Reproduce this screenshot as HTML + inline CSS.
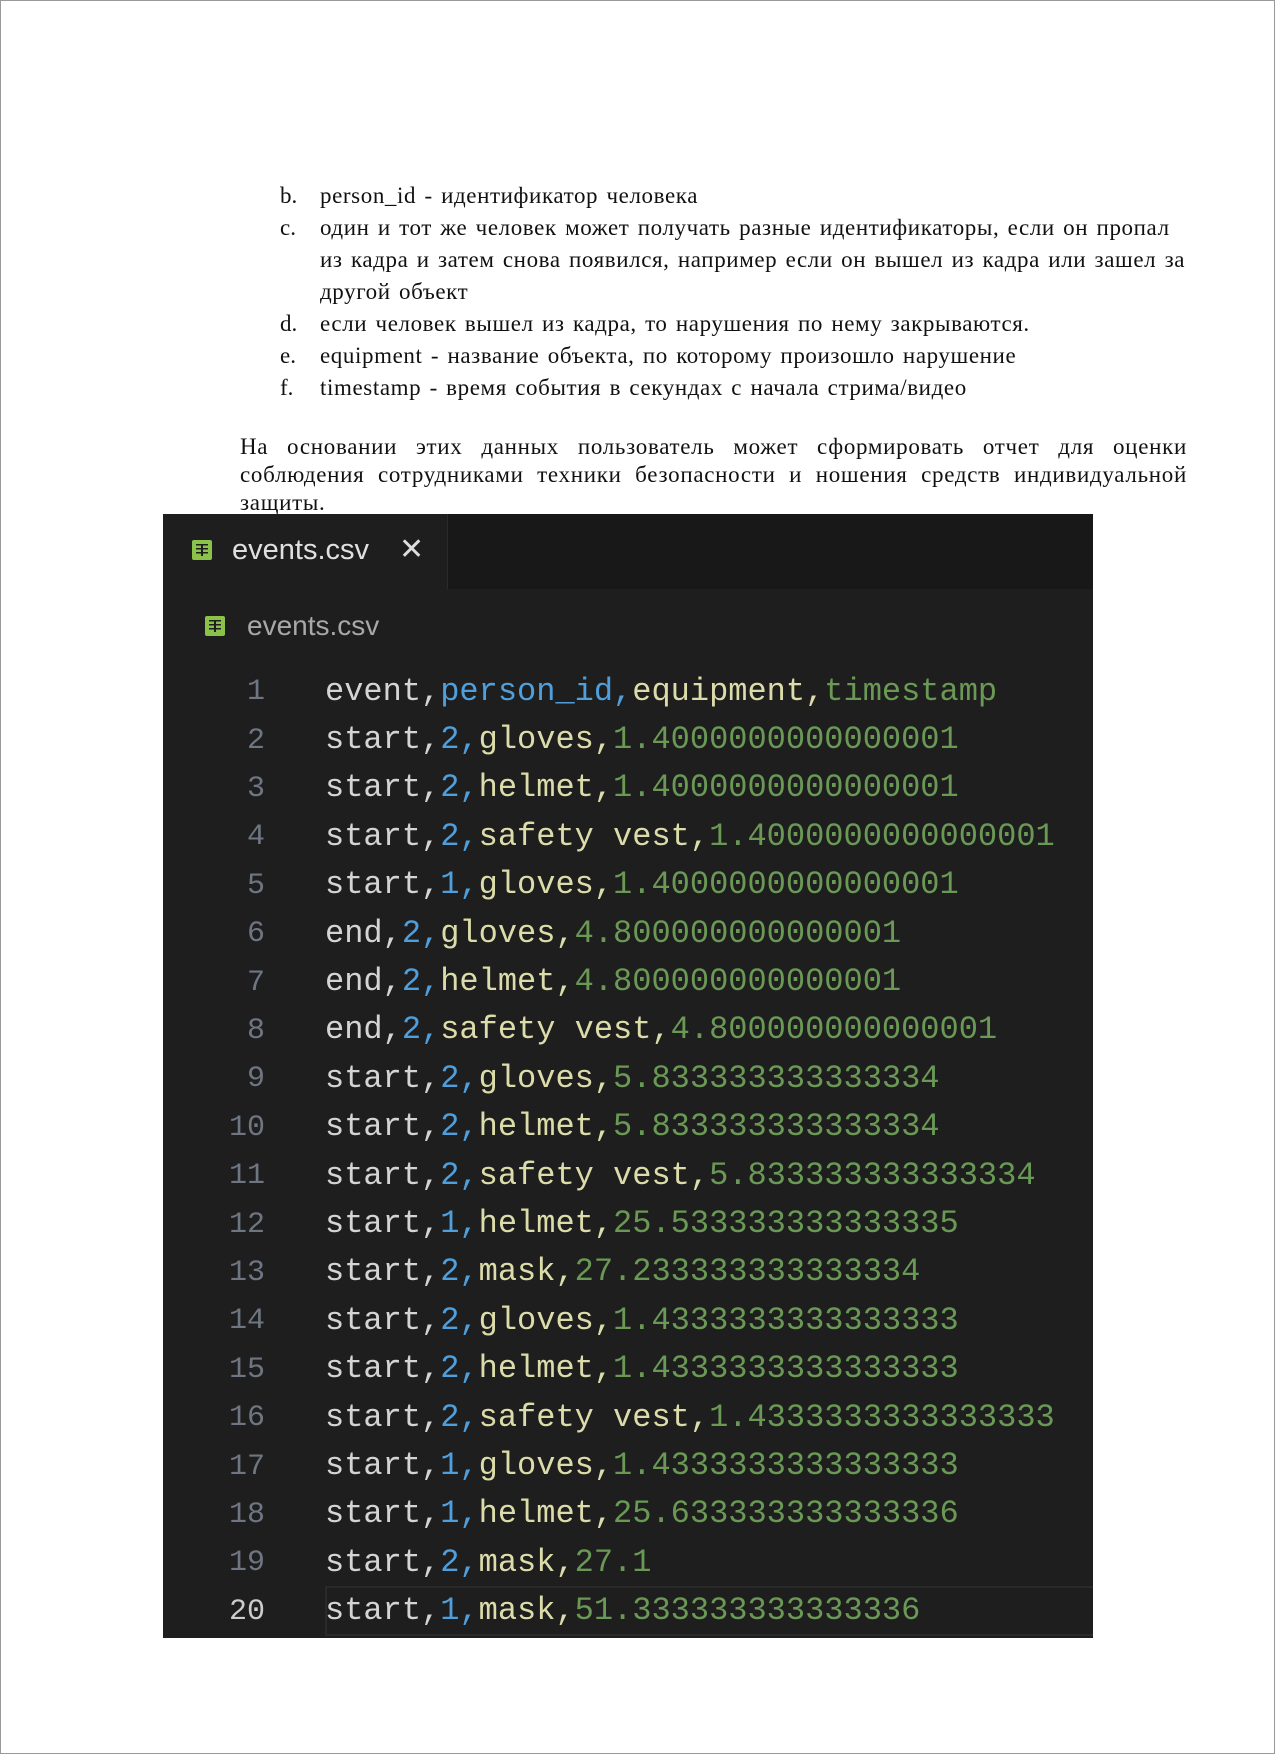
<!DOCTYPE html>
<html><head><meta charset="utf-8"><style>
html,body{margin:0;padding:0;background:#fff;}
body{width:1275px;height:1754px;position:relative;overflow:hidden;}
.border{position:absolute;left:0;top:0;width:1273px;height:1752px;border:1px solid #999;}
.t{font-family:"Liberation Serif","Noto Serif CJK SC",serif;font-size:23px;letter-spacing:0.6px;word-spacing:2px;color:#111;position:absolute;white-space:nowrap;line-height:32px;}
.lbl{position:absolute;left:280px;letter-spacing:0;}
.txt{position:absolute;left:320px;}
.p{position:absolute;left:240px;width:947px;font-family:"Liberation Serif",serif;font-size:23px;letter-spacing:0.7px;line-height:28px;text-align:justify;color:#111;}
.panel{position:absolute;left:163px;top:514px;width:930px;height:1124px;background:#1e1e1e;overflow:hidden;}
.bar{position:absolute;left:0;top:0;width:930px;height:75px;background:#181818;}
.tab{position:absolute;left:0;top:0;width:284px;height:75px;background:#1e1e1e;border-right:1px solid #2b2b2b;}
.ui{font-family:"Liberation Sans",sans-serif;position:absolute;white-space:nowrap;}
.ic{position:absolute;width:20px;height:20px;background:#8bc34a;border-radius:2px;}
.ic:after{content:"";position:absolute;left:4px;top:4px;width:12px;height:12px;background:repeating-linear-gradient(#1e1e1e 0 1.5px,transparent 1.5px 4px),linear-gradient(90deg,transparent 5px,#1e1e1e 5px 7px,transparent 7px);}
.ln{position:absolute;font-family:"Liberation Mono",monospace;font-size:30px;color:#6e7681;width:80px;text-align:right;left:22px;}
.row{position:absolute;left:162px;white-space:pre;color:#d4d4d4;}
.b{color:#4f9fdc}.y{color:#dcdcaa}.g{color:#6a9955}
.hl{position:absolute;left:162px;top:1072px;width:780px;height:46px;border:2px solid #2a2a2a;}
</style></head><body>
<div class="border"></div>
<div class="t" style="top:180px"><span class="lbl">b.</span><span class="txt">person_id - идентификатор человека</span></div>
<div class="t" style="top:212px"><span class="lbl">c.</span><span class="txt">один и тот же человек может получать разные идентификаторы, если он пропал</span></div>
<div class="t" style="top:244px"><span class="txt">из кадра и затем снова появился, например если он вышел из кадра или зашел за</span></div>
<div class="t" style="top:276px"><span class="txt">другой объект</span></div>
<div class="t" style="top:308px"><span class="lbl">d.</span><span class="txt">если человек вышел из кадра, то нарушения по нему закрываются.</span></div>
<div class="t" style="top:340px"><span class="lbl">e.</span><span class="txt">equipment - название объекта, по которому произошло нарушение</span></div>
<div class="t" style="top:372px"><span class="lbl">f.</span><span class="txt">timestamp - время события в секундах с начала стрима/видео</span></div>
<div class="p" style="top:433px">На основании этих данных пользователь может сформировать отчет для оценки соблюдения сотрудниками техники безопасности и ношения средств индивидуальной защиты.</div>
<div class="panel">
<div class="bar"></div><div class="tab"></div>
<div class="ic" style="left:29px;top:26px"></div>
<div class="ui" style="left:69px;top:20px;font-size:29px;color:#e0e0e0">events.csv</div>
<div class="ui" style="left:236px;top:18px;font-size:30px;color:#ddd">✕</div>
<div class="ic" style="left:42px;top:102px"></div>
<div class="ui" style="left:84px;top:96px;font-size:28px;color:#a8a8a8">events.csv</div>
<div class="hl"></div>
</div>
<div style="position:absolute;left:163px;top:522px;width:930px;height:1116px;overflow:hidden;font-family:'Liberation Mono',monospace;font-size:32px">
<div class="ln" style="top:153px">1</div><div class="row" style="top:151px">event,<span class="b">person_id,</span><span class="y">equipment,</span><span class="g">timestamp</span></div>
<div class="ln" style="top:202px">2</div><div class="row" style="top:199px">start,<span class="b">2,</span><span class="y">gloves,</span><span class="g">1.4000000000000001</span></div>
<div class="ln" style="top:250px">3</div><div class="row" style="top:247px">start,<span class="b">2,</span><span class="y">helmet,</span><span class="g">1.4000000000000001</span></div>
<div class="ln" style="top:298px">4</div><div class="row" style="top:296px">start,<span class="b">2,</span><span class="y">safety vest,</span><span class="g">1.4000000000000001</span></div>
<div class="ln" style="top:347px">5</div><div class="row" style="top:344px">start,<span class="b">1,</span><span class="y">gloves,</span><span class="g">1.4000000000000001</span></div>
<div class="ln" style="top:395px">6</div><div class="row" style="top:393px">end,<span class="b">2,</span><span class="y">gloves,</span><span class="g">4.800000000000001</span></div>
<div class="ln" style="top:444px">7</div><div class="row" style="top:441px">end,<span class="b">2,</span><span class="y">helmet,</span><span class="g">4.800000000000001</span></div>
<div class="ln" style="top:492px">8</div><div class="row" style="top:489px">end,<span class="b">2,</span><span class="y">safety vest,</span><span class="g">4.800000000000001</span></div>
<div class="ln" style="top:540px">9</div><div class="row" style="top:538px">start,<span class="b">2,</span><span class="y">gloves,</span><span class="g">5.833333333333334</span></div>
<div class="ln" style="top:589px">10</div><div class="row" style="top:586px">start,<span class="b">2,</span><span class="y">helmet,</span><span class="g">5.833333333333334</span></div>
<div class="ln" style="top:637px">11</div><div class="row" style="top:635px">start,<span class="b">2,</span><span class="y">safety vest,</span><span class="g">5.833333333333334</span></div>
<div class="ln" style="top:686px">12</div><div class="row" style="top:683px">start,<span class="b">1,</span><span class="y">helmet,</span><span class="g">25.533333333333335</span></div>
<div class="ln" style="top:734px">13</div><div class="row" style="top:731px">start,<span class="b">2,</span><span class="y">mask,</span><span class="g">27.233333333333334</span></div>
<div class="ln" style="top:782px">14</div><div class="row" style="top:780px">start,<span class="b">2,</span><span class="y">gloves,</span><span class="g">1.4333333333333333</span></div>
<div class="ln" style="top:831px">15</div><div class="row" style="top:828px">start,<span class="b">2,</span><span class="y">helmet,</span><span class="g">1.4333333333333333</span></div>
<div class="ln" style="top:879px">16</div><div class="row" style="top:877px">start,<span class="b">2,</span><span class="y">safety vest,</span><span class="g">1.4333333333333333</span></div>
<div class="ln" style="top:928px">17</div><div class="row" style="top:925px">start,<span class="b">1,</span><span class="y">gloves,</span><span class="g">1.4333333333333333</span></div>
<div class="ln" style="top:976px">18</div><div class="row" style="top:973px">start,<span class="b">1,</span><span class="y">helmet,</span><span class="g">25.633333333333336</span></div>
<div class="ln" style="top:1024px">19</div><div class="row" style="top:1022px">start,<span class="b">2,</span><span class="y">mask,</span><span class="g">27.1</span></div>
<div class="ln" style="top:1073px;color:#ccc">20</div><div class="row" style="top:1070px">start,<span class="b">1,</span><span class="y">mask,</span><span class="g">51.333333333333336</span></div>
</div>
</body></html>
